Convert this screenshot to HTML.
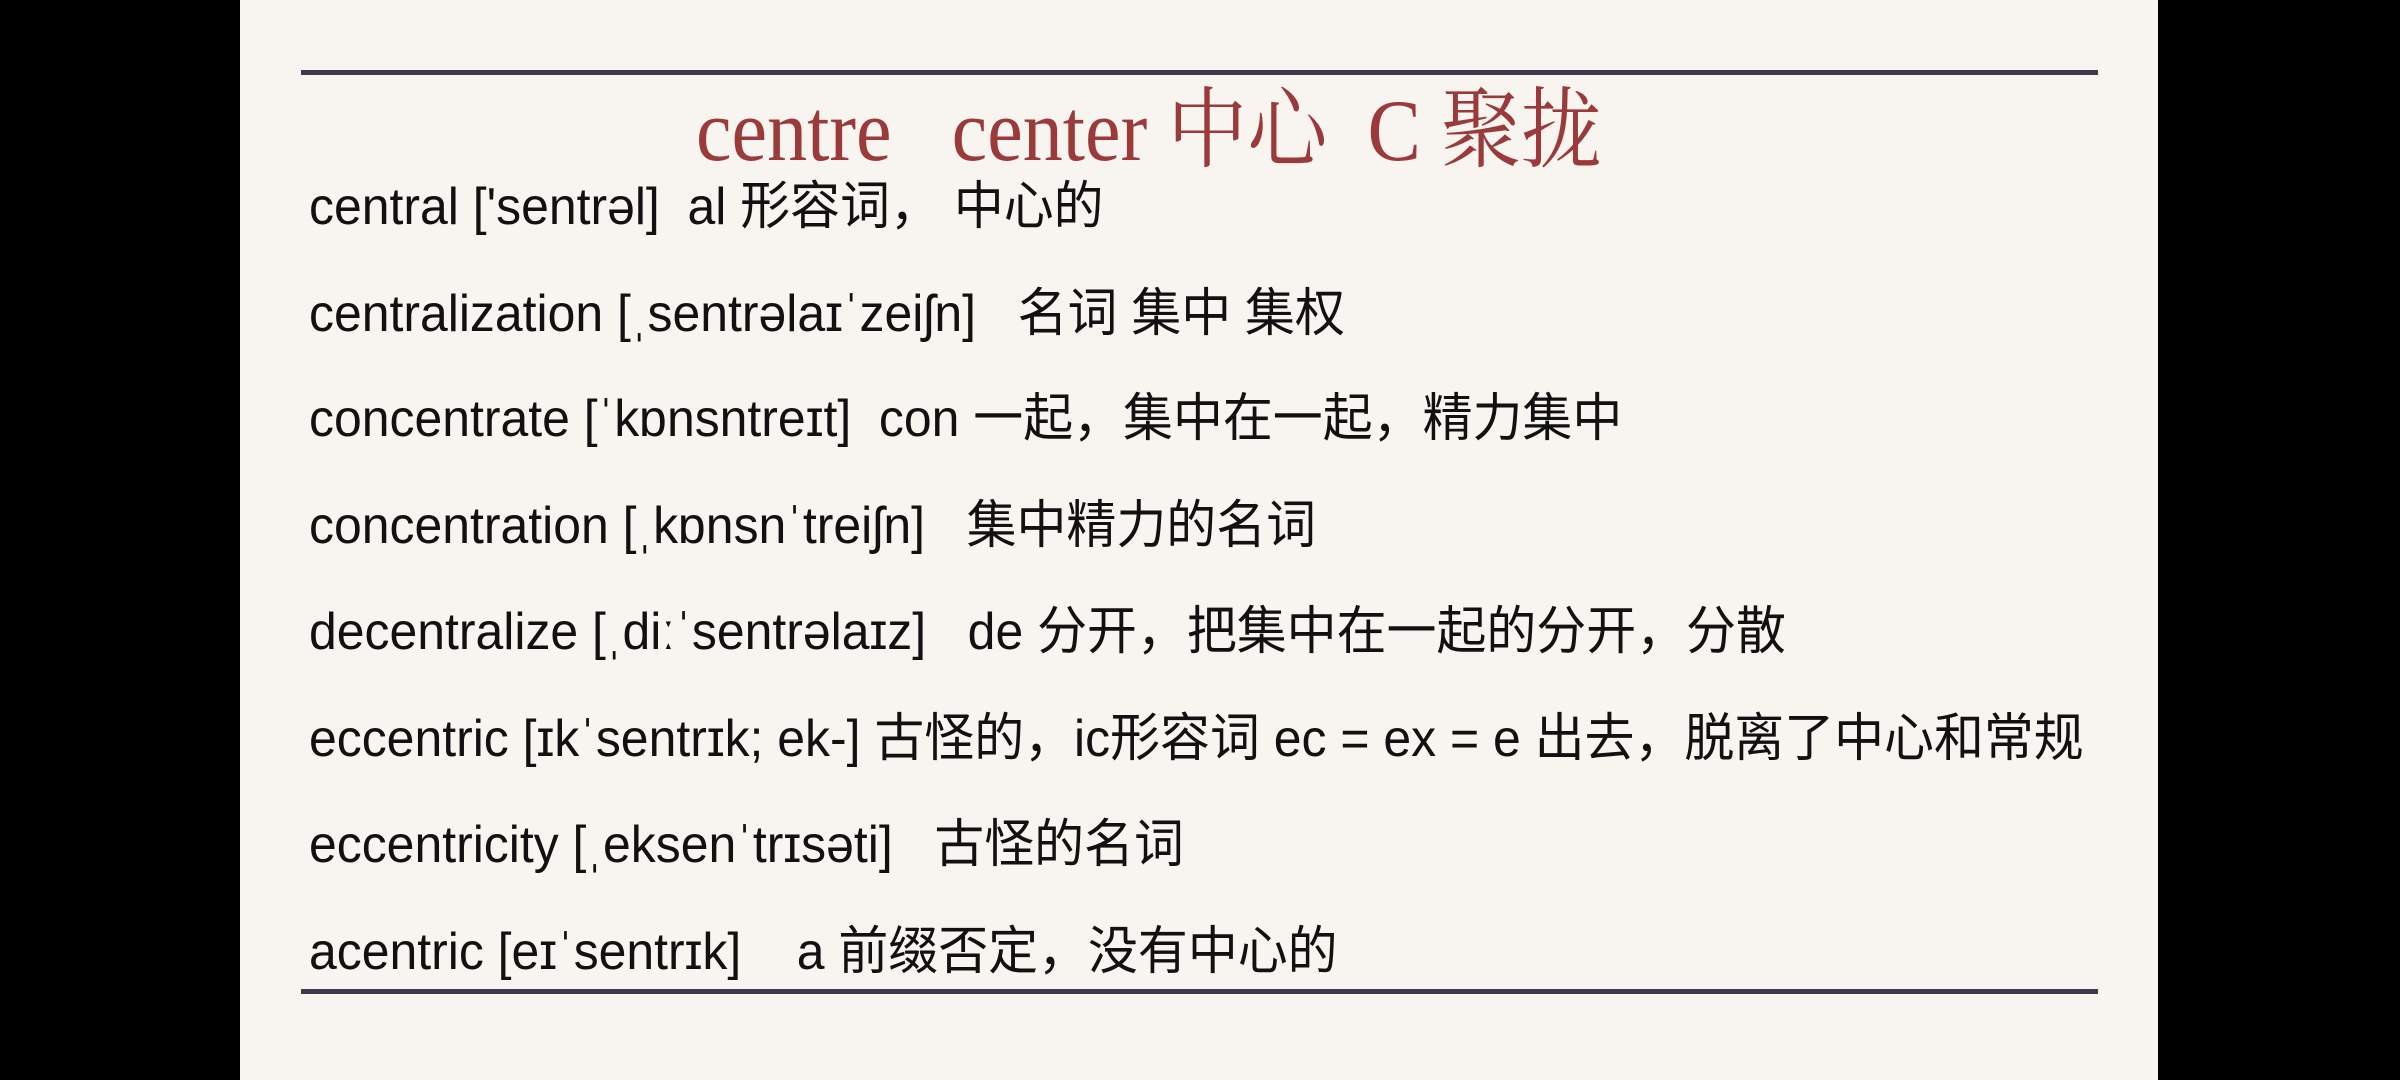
<!DOCTYPE html>
<html><head><meta charset="utf-8"><style>
html,body{margin:0;padding:0;background:#000;width:2400px;height:1080px;overflow:hidden}
.slide{position:absolute;left:240px;top:0;width:1918px;height:1080px;background:#f8f4ef}
.line{position:absolute;left:301px;width:1797px;height:5px;background:#3b3850}
.title{position:absolute;left:696px;top:82px;height:100px;white-space:nowrap;font-family:"Liberation Serif","Noto Serif CJK SC",serif;font-size:88px;color:#9b3a3a;transform:scaleX(0.91);transform-origin:left center;line-height:100px}
.row{position:absolute;left:309px;white-space:nowrap;font-family:"Liberation Sans","Noto Sans CJK SC",sans-serif;font-size:52px;color:#111;line-height:60px;transform:scaleX(0.96);transform-origin:left center}
</style></head><body>
<div class="slide"></div>
<div class="line" style="top:70px"></div>
<div class="line" style="top:989px"></div>
<div class="title">centre&nbsp;&nbsp;&nbsp;center 中心&nbsp;&nbsp;C 聚拢</div>
<div class="row" style="top:177px">central ['sentrəl]&nbsp; al 形容词，&nbsp;中心的</div>
<div class="row" style="top:284px">centralization [ˌsentrəlaɪˈzeiʃn]&nbsp;&nbsp; 名词 集中 集权</div>
<div class="row" style="top:389px">concentrate [ˈkɒnsntreɪt]&nbsp; con 一起，集中在一起，精力集中</div>
<div class="row" style="top:496px">concentration [ˌkɒnsnˈtreiʃn]&nbsp;&nbsp; 集中精力的名词</div>
<div class="row" style="top:602px">decentralize [ˌdiːˈsentrəlaɪz]&nbsp;&nbsp; de 分开，把集中在一起的分开，分散</div>
<div class="row" style="top:709px">eccentric [ɪkˈsentrɪk; ek-] 古怪的，ic形容词 ec = ex = e 出去，脱离了中心和常规</div>
<div class="row" style="top:815px">eccentricity [ˌeksenˈtrɪsəti]&nbsp;&nbsp; 古怪的名词</div>
<div class="row" style="top:922px">acentric [eɪˈsentrɪk]&nbsp;&nbsp;&nbsp; a 前缀否定，没有中心的</div>
</body></html>
